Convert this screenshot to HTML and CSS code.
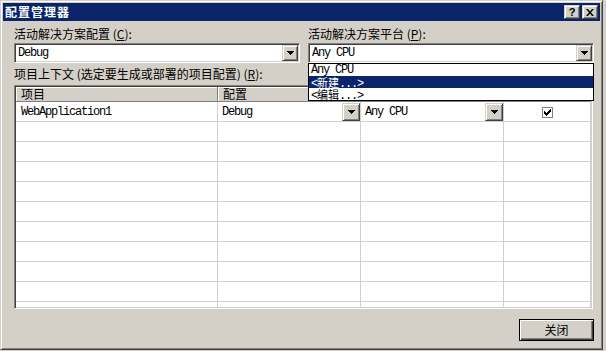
FILE: index.html
```html
<!DOCTYPE html>
<html lang="zh-CN">
<head>
    <meta charset="UTF-8">
    <meta name="viewport" content="width=device-width, initial-scale=1.0">
    <title>配置管理器</title>
    <link rel="stylesheet" href="styles.css">
</head>
<body>
    <div class="window">
        <div class="titlebar">
            <span class="title">配置管理器</span>
            <div class="caption-btns">
                <span class="cap-btn help">?</span>
                <span class="cap-btn">
                    <svg width="8" height="7" viewBox="0 0 8 7"><path d="M0 0h2l2 2.5L6 0h2L5 3.5 8 7H6L4 4.5 2 7H0l3-3.5z"/></svg>
                </span>
            </div>
        </div>

        <div class="content">
            <div class="top">
                <div class="field">
                    <label>活动解决方案配置 (<u>C</u>):</label>
                    <div class="combo">
                        <span class="combo-text mono">Debug</span>
                        <span class="drop-btn"><svg class="arrow" width="7" height="4"><path d="M0 0h7v1H0zM1 1h5v1H1zM2 2h3v1H2zM3 3h1v1H3z"/></svg></span>
                    </div>
                </div>
                <div class="field">
                    <label>活动解决方案平台 (<u>P</u>):</label>
                    <div class="combo">
                        <span class="combo-text mono">Any CPU</span>
                        <span class="drop-btn"><svg class="arrow" width="7" height="4"><path d="M0 0h7v1H0zM1 1h5v1H1zM2 2h3v1H2zM3 3h1v1H3z"/></svg></span>
                    </div>
                    <ul class="droplist mono">
                        <li>Any CPU</li>
                        <li class="selected">&lt;<span class="cjk">新建</span>...&gt;</li>
                        <li>&lt;<span class="cjk">编辑</span>...&gt;</li>
                    </ul>
                </div>
            </div>

            <label class="grid-label">项目上下文 (选定要生成或部署的项目配置) (<u>R</u>):</label>

            <div class="grid">
                <div class="row head">
                    <div class="cell">项目</div>
                    <div class="cell">配置</div>
                    <div class="cell"></div>
                    <div class="cell"></div>
                </div>
                <div class="row">
                    <div class="cell mono">WebApplication1</div>
                    <div class="cell mono">Debug<span class="drop-btn cell-btn"><svg class="arrow" width="7" height="4"><path d="M0 0h7v1H0zM1 1h5v1H1zM2 2h3v1H2zM3 3h1v1H3z"/></svg></span></div>
                    <div class="cell mono">Any CPU<span class="drop-btn cell-btn"><svg class="arrow" width="7" height="4"><path d="M0 0h7v1H0zM1 1h5v1H1zM2 2h3v1H2zM3 3h1v1H3z"/></svg></span></div>
                    <div class="cell check-cell">
                        <span class="checkbox"><svg width="7" height="7" viewBox="0 0 7 7"><path d="M0 2h1v1h1v1h1V3h1V2h1V1h1V0h1v3H6v1H5v1H4v1H3v1H2V6H1V5H0z"/></svg></span>
                    </div>
                </div>
                <div class="row"><div class="cell"></div><div class="cell"></div><div class="cell"></div><div class="cell"></div></div>
                <div class="row"><div class="cell"></div><div class="cell"></div><div class="cell"></div><div class="cell"></div></div>
                <div class="row"><div class="cell"></div><div class="cell"></div><div class="cell"></div><div class="cell"></div></div>
                <div class="row"><div class="cell"></div><div class="cell"></div><div class="cell"></div><div class="cell"></div></div>
                <div class="row"><div class="cell"></div><div class="cell"></div><div class="cell"></div><div class="cell"></div></div>
                <div class="row"><div class="cell"></div><div class="cell"></div><div class="cell"></div><div class="cell"></div></div>
                <div class="row"><div class="cell"></div><div class="cell"></div><div class="cell"></div><div class="cell"></div></div>
                <div class="row"><div class="cell"></div><div class="cell"></div><div class="cell"></div><div class="cell"></div></div>
                <div class="row"><div class="cell"></div><div class="cell"></div><div class="cell"></div><div class="cell"></div></div>
                <div class="row"><div class="cell"></div><div class="cell"></div><div class="cell"></div><div class="cell"></div></div>
            </div>

            <div class="footer">
                <button class="btn">关闭</button>
            </div>
        </div>
    </div>
</body>
</html>
```

FILE: styles.css
```css
body {
    margin: 0;
    background-color: #d4d0c8;
    font-family: "Noto Sans CJK SC", sans-serif;
    font-size: 12px;
    color: #000;
}

.window {
    width: 603px;
    height: 350px;
    box-sizing: border-box;
    border: 1px solid;
    border-color: #d4d0c8 #404040 #404040 #d4d0c8;
    box-shadow: inset 1px 1px #fff, inset -1px -1px #808080;
    padding: 2px;
}

.titlebar {
    height: 18px;
    background: #0a246a;
    display: flex;
    align-items: center;
    justify-content: space-between;
    padding: 0 2px 0 2px;
}

.title {
    color: #fff;
    font-weight: bold;
    letter-spacing: 1px;
    line-height: 18px;
}

.caption-btns {
    display: flex;
    gap: 2px;
}

.cap-btn,
.drop-btn {
    box-sizing: border-box;
    background: #d4d0c8;
    border: 1px solid;
    border-color: #d4d0c8 #404040 #404040 #d4d0c8;
    box-shadow: inset 1px 1px #fff, inset -1px -1px #808080;
    display: flex;
    align-items: center;
    justify-content: center;
}

.cap-btn {
    width: 16px;
    height: 14px;
}

.help {
    font-family: "Liberation Sans", sans-serif;
    font-weight: bold;
    font-size: 11px;
    line-height: 12px;
}

.content {
    padding: 6px 0 0 11px;
}

.top {
    display: flex;
    gap: 8px;
}

.field {
    width: 286px;
    position: relative;
}

label {
    display: block;
    height: 14px;
    line-height: 14px;
}

.field label {
    margin-bottom: 2px;
}

.mono {
    font-family: "Liberation Mono", "Noto Sans CJK SC", monospace;
    font-size: 12px;
    letter-spacing: -1.2px;
}

.cjk {
    font-family: "Noto Sans CJK SC", sans-serif;
    font-size: 11px;
    letter-spacing: 0;
}

.combo {
    box-sizing: border-box;
    height: 20px;
    background: #fff;
    border: 1px solid;
    border-color: #808080 #fff #fff #808080;
    box-shadow: inset 1px 1px #404040, inset -1px -1px #d4d0c8;
    padding: 1px;
    display: flex;
}

.combo-text {
    flex: 1;
    line-height: 17px;
    padding-left: 2px;
}

.combo .drop-btn {
    width: 16px;
    height: 16px;
}

.droplist {
    position: absolute;
    top: 36px;
    left: 0;
    width: 286px;
    box-sizing: border-box;
    margin: 0;
    padding: 0;
    list-style: none;
    background: #fff;
    border: 1px solid #000;
    z-index: 2;
}

.droplist li {
    height: 12px;
    line-height: 12px;
    padding-left: 2px;
}

.droplist .selected {
    background: #0a246a;
    color: #fff;
}

.grid-label {
    margin-top: 4px;
}

.grid {
    margin-top: 4px;
    width: 579px;
    height: 224px;
    box-sizing: border-box;
    overflow: hidden;
    background: #fff;
    border: 1px solid;
    border-color: #808080 #fff #fff #808080;
    box-shadow: inset 1px 1px #404040, inset -1px -1px #d4d0c8;
    padding: 1px;
}

.row {
    display: grid;
    grid-template-columns: 202px 143px 143px 87px;
    height: 20px;
}

.cell {
    box-sizing: border-box;
    border-right: 1px solid #d0d0d0;
    border-bottom: 1px solid #d0d0d0;
    display: flex;
    align-items: center;
    padding-left: 4px;
}

.cell:first-child {
    padding-left: 5px;
}

.row.head {
    height: 15px;
}

.head .cell {
    background: #d4d0c8;
    border-right-color: #808080;
    border-bottom-color: #808080;
    box-shadow: inset 1px 1px #fff;
    line-height: 14px;
    padding-left: 5px;
}

.cell-btn {
    width: 18px;
    height: 18px;
    margin-left: auto;
    align-self: flex-start;
    margin-top: 1px;
}

.check-cell {
    justify-content: center;
    padding-left: 0;
}

.checkbox {
    box-sizing: border-box;
    width: 11px;
    height: 11px;
    border: 1px solid #808080;
    display: flex;
    align-items: center;
    justify-content: center;
    margin-top: 2px;
}

.footer {
    width: 579px;
    display: flex;
    justify-content: flex-end;
    margin-top: 10px;
}

.btn {
    width: 75px;
    height: 22px;
    margin-right: -1px;
    box-sizing: border-box;
    background: #d4d0c8;
    border: 1px solid #000;
    box-shadow: inset 1px 1px #fff, inset -1px -1px #404040, inset -2px -2px #808080;
    font-family: "Noto Sans CJK SC", sans-serif;
    font-size: 12px;
    line-height: 14px;
    padding: 0;
}
```
